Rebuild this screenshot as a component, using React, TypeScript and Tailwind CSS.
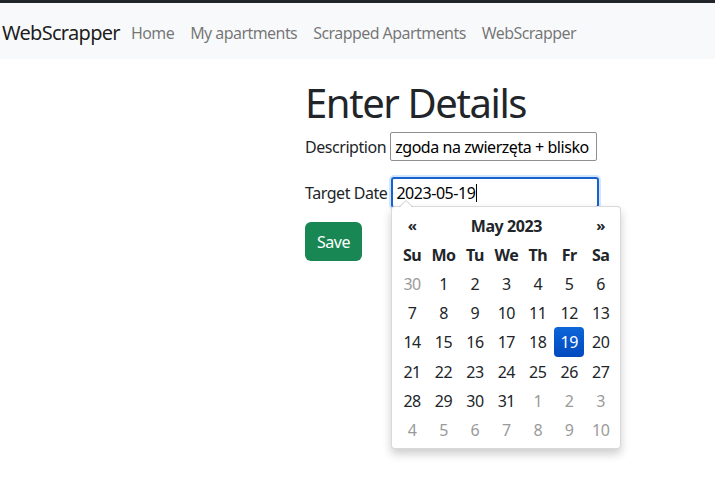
const NAV_LINKS = ['Home', 'My apartments', 'Scrapped Apartments', 'WebScrapper']

const DAY_NAMES = ['Su', 'Mo', 'Tu', 'We', 'Th', 'Fr', 'Sa']
const COL_W = ['w-[30px]', 'w-[34px]', 'w-[32px]', 'w-[34px]', 'w-[30px]', 'w-[30px]', 'w-[30px]']

type Day = { n: number; muted?: boolean; active?: boolean }

// May 2023, starting on Sunday 30 April
const WEEKS: Day[][] = (() => {
  const days: Day[] = [{ n: 30, muted: true }]
  for (let i = 1; i <= 31; i++) days.push({ n: i, active: i === 19 })
  for (let i = 1; i <= 10; i++) days.push({ n: i, muted: true })
  const rows: Day[][] = []
  for (let r = 0; r < 6; r++) rows.push(days.slice(r * 7, r * 7 + 7))
  return rows
})()

function Navbar() {
  return (
    <nav className="border-t-[3px] border-[#212529] bg-[#f8f9fa] h-[59px] flex items-center pt-[3px]">
      <a className="ml-[2px] mr-[3px] text-[20px] tracking-[-0.035em] text-[rgba(0,0,0,0.9)] leading-[30px]">WebScrapper</a>
      <ul className="flex">
        {NAV_LINKS.map(l => (
          <li key={l}>
            <a className="block px-2 text-[16px] tracking-[-0.035em] text-[rgba(0,0,0,0.55)] leading-6">{l}</a>
          </li>
        ))}
      </ul>
    </nav>
  )
}

function DatePicker() {
  return (
    <div className="absolute left-0 top-[29px] w-[230px] bg-white border border-[rgba(0,0,0,0.15)] rounded-[4px] shadow-[0_5px_10px_rgba(0,0,0,0.2)] p-[4px] z-10">
      {/* arrow */}
      <div className="absolute -top-[7px] left-[7px] w-0 h-0 border-x-[7px] border-x-transparent border-b-[7px] border-b-[rgba(0,0,0,0.2)]" />
      <div className="absolute -top-[6px] left-[8px] w-0 h-0 border-x-[6px] border-x-transparent border-b-[6px] border-b-white" />
      <table className="table-fixed w-[220px] border-collapse text-[16px] text-[#212529]">
        <thead>
          <tr className="h-[29px]">
            <th className="font-bold text-[15px]">«</th>
            <th colSpan={5} className="font-bold">May 2023</th>
            <th className="font-bold text-[15px]">»</th>
          </tr>
          <tr className="h-[29px]">
            {DAY_NAMES.map((d, i) => (
              <th key={d} className={`${COL_W[i]} p-0 font-bold text-center`}>{d}</th>
            ))}
          </tr>
        </thead>
        <tbody>
          {WEEKS.map((w, r) => (
            <tr key={r} className="h-[29px]">
              {w.map((d, i) => (
                <td key={i} className="p-0 text-center">
                  {d.active ? (
                    <span className="mx-auto flex items-center justify-center w-[30px] h-[30px] rounded-[4px] text-white bg-gradient-to-b from-[#0d66d8] to-[#0348bf]">
                      {d.n}
                    </span>
                  ) : (
                    <span className={d.muted ? 'text-[#9a9a9a]' : ''}>{d.n}</span>
                  )}
                </td>
              ))}
            </tr>
          ))}
        </tbody>
      </table>
    </div>
  )
}

export default function App() {
  return (
    <div className="min-h-[494px] bg-white font-['Segoe_UI','Noto_Sans',sans-serif] tracking-[-0.028em] text-[#212529]">
      <Navbar />
      <main className="pl-[305px] pt-[20px]">
        <h1 className="text-[40px] font-normal tracking-[-0.035em] leading-[1.2] mb-[5px]">Enter Details</h1>
        <div className="flex items-center gap-[4px] h-[29px] text-[16px]">
          <label>Description</label>
          <input
            readOnly
            value="zgoda na zwierzęta + blisko"
            className="w-[207px] h-[29px] border border-[#8f8f8f] rounded-[2px] px-[4px] text-[16px] text-black outline-none"
          />
        </div>
        <div className="flex items-center gap-[4px] h-[29px] mt-[17px] text-[16px]">
          <label>Target Date</label>
          <div className="relative">
            <div className="w-[208px] h-[31px] border-2 border-[#1762cc] rounded-[3px] shadow-[0_0_0_2px_rgba(13,110,253,0.18)] px-[3px] flex items-center text-black">
              2023-05-19<span className="w-px h-[18px] bg-black ml-px" />
            </div>
            <DatePicker />
          </div>
        </div>
        <button className="mt-[15px] h-[39px] px-3 rounded-[6px] bg-[#198754] text-white text-[16px]">Save</button>
      </main>
    </div>
  )
}
